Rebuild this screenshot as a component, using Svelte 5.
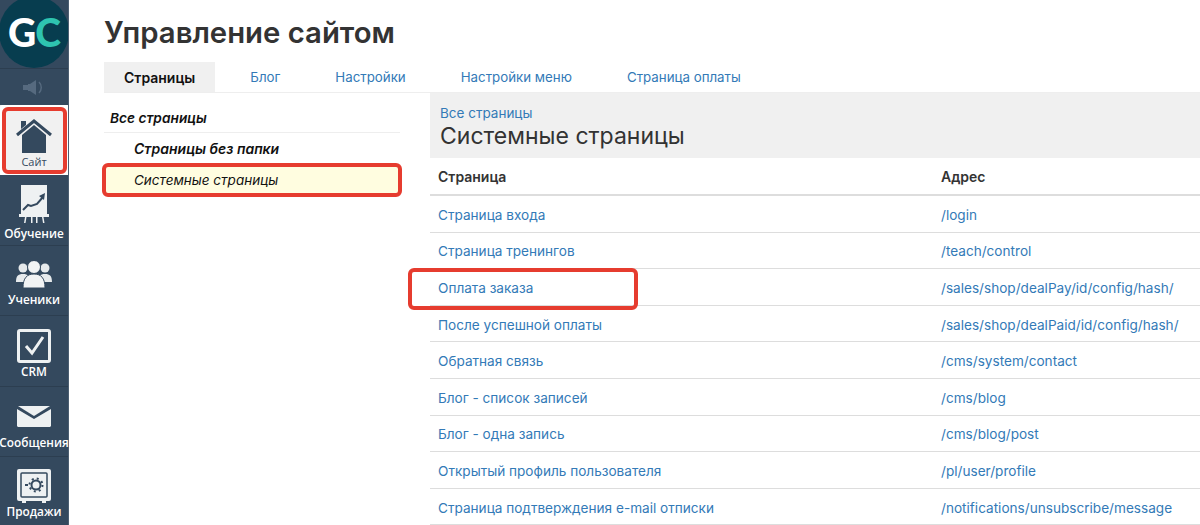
<script>
  const tabs = ["Страницы", "Блог", "Настройки", "Настройки меню", "Страница оплаты"];
  const rows = [
    ["Страница входа", "/login"],
    ["Страница тренингов", "/teach/control"],
    ["Оплата заказа", "/sales/shop/dealPay/id/config/hash/"],
    ["После успешной оплаты", "/sales/shop/dealPaid/id/config/hash/"],
    ["Обратная связь", "/cms/system/contact"],
    ["Блог - список записей", "/cms/blog"],
    ["Блог - одна запись", "/cms/blog/post"],
    ["Открытый профиль пользователя", "/pl/user/profile"],
    ["Страница подтверждения e-mail отписки", "/notifications/unsubscribe/message"]
  ];
</script>

<div class="page">
  <nav class="side">
    <div class="logo">
      <div class="circle"><span class="g">G</span><span class="c">C</span></div>
    </div>
    <div class="sound">
      <svg width="22" height="15" viewBox="0 0 22 15">
        <path d="M0 5h5V4h2l6-4v15L7 11H5v-1H0z" fill="#566a7f" />
        <path d="M16 2c3 3 3 8 0 11" fill="none" stroke="#566a7f" stroke-width="1.500" />
      </svg>
    </div>
    <div class="item site">
      <svg width="36" height="34" viewBox="0 0 36 34">
        <path d="M5 2h5v4l-5 4z" fill="#34495e" />
        <path d="M1 16 18 2l17 14" fill="none" stroke="#34495e" stroke-width="3" />
        <path d="M6 16 18 6l12 10v18H6z" fill="#34495e" />
      </svg>
      <span>Сайт</span>
      <i class="mark"></i>
    </div>
    <div class="item learn">
      <svg width="30" height="38" viewBox="0 0 30 38">
        <rect x="2" y="0" width="26" height="30" fill="#eef1f2" />
        <path d="M4 25l5-5 3 1 6-2 6-7" fill="none" stroke="#34495e" stroke-width="2" />
        <path d="M26 8l-1 7-5-4z" fill="#34495e" />
        <path d="M0 29h30v3H0zM6 32h1.500l-1 6H5zM12 32h1.500v6H12zM17 32h1.500v6H17zM23 32h1.500l1 6H24z" fill="#eef1f2" />
      </svg>
      <span>Обучение</span>
    </div>
    <div class="item people">
      <svg width="36" height="27" viewBox="0 0 36 27">
        <circle cx="7" cy="7" r="4.500" fill="#e6eaec" />
        <circle cx="29" cy="7" r="4.500" fill="#e6eaec" />
        <path d="M0 21c0-6 2-8 7-8s7 2 7 8zM22 21c0-6 2-8 7-8s7 2 7 8z" fill="#e6eaec" />
        <circle cx="18" cy="6" r="6.500" fill="#f1f3f4" stroke="#34495e" />
        <path d="M7 27c0-10 4-14 11-14s11 4 11 14z" fill="#f1f3f4" stroke="#34495e" />
      </svg>
      <span>Ученики</span>
    </div>
    <div class="item">
      <svg width="34" height="34" viewBox="0 0 34 34">
        <rect x="1.500" y="1.500" width="31" height="31" rx="1.500" fill="#34495e" stroke="#eef1f2" stroke-width="3" />
        <path d="M9 17l6 7L26 8" fill="none" stroke="#eef1f2" stroke-width="3" />
      </svg>
      <span>CRM</span>
    </div>
    <div class="item mail">
      <svg width="34" height="21" viewBox="0 0 34 21">
        <path d="M0 3v16.500c0 .8.700 1.500 1.500 1.500h31c.8 0 1.500-.7 1.500-1.500V3L17 13z" fill="#eef1f2" />
        <path d="M1 0h32l-16 10z" fill="#eef1f2" />
      </svg>
      <span>Сообщения</span>
    </div>
    <div class="item safe">
      <svg width="34" height="34" viewBox="0 0 34 34">
        <rect x="0" y="0" width="34" height="32" rx="2" fill="#eef1f2" />
        <rect x="4" y="4" width="26" height="24" rx="1" fill="#eef1f2" stroke="#34495e" stroke-width="1.500" />
        <circle cx="19" cy="16" r="4.500" fill="none" stroke="#34495e" stroke-width="2" />
        <circle cx="19" cy="16" r="6.500" fill="none" stroke="#34495e" stroke-width="2" stroke-dasharray="2 3.100" />
        <path d="M8 16h3" stroke="#34495e" stroke-width="2" />
        <path d="M5 32h4v2H5zM25 32h4v2h-4z" fill="#eef1f2" />
      </svg>
      <span>Продажи</span>
    </div>
  </nav>

  <main class="main">
    <h1>Управление сайтом</h1>
    <div class="tabs">
      {#each tabs as tab, i}
        <span class="tab" class:active={i === 0}>{tab}</span>
      {/each}
    </div>
    <div class="cols">
      <aside class="tree">
        <div class="all">Все страницы</div>
        <div class="folder">Страницы без папки</div>
        <div class="folder current">
          Системные страницы
          <i class="mark"></i>
        </div>
      </aside>
      <section class="content">
        <header class="head">
          <span class="crumb">Все страницы</span>
          <h2>Системные страницы</h2>
        </header>
        <div class="row th">
          <span>Страница</span>
          <span>Адрес</span>
        </div>
        {#each rows as row, i}
          <div class="row">
            <span class="name">
              {row[0]}
              {#if i === 2}<i class="mark"></i>{/if}
            </span>
            <span>{row[1]}</span>
          </div>
        {/each}
      </section>
    </div>
  </main>
</div>

<style>
  :global(body) {
    margin: 0;
    background: #fff;
  }
  .page {
    display: flex;
    width: 1200px;
    height: 525px;
    overflow: hidden;
    font-family: Inter, "Liberation Sans", sans-serif;
  }
  .side {
    flex: 0 0 69px;
    width: 69px;
    background: #34495e;
    font-family: "Open Sans", sans-serif;
    border-right: 1px solid #4c5f72;
    box-sizing: border-box;
  }
  .logo {
    height: 68px;
    overflow: hidden;
    border-bottom: 1px solid #2c3e50;
    box-sizing: content-box;
  }
  .circle {
    width: 70px;
    height: 72px;
    margin: -4px 0 0 -1px;
    border-radius: 50%;
    background: #073d4f;
    display: flex;
    align-items: center;
    justify-content: center;
    font: 900 39px/1 Lato, sans-serif;
    letter-spacing: -1px;
  }
  .g {
    color: #fff;
  }
  .c {
    color: #2ec4b0;
  }
  .sound {
    height: 36px;
    display: flex;
    align-items: center;
    justify-content: center;
  }
  .item {
    position: relative;
    height: 70.500px;
    box-sizing: border-box;
    border-bottom: 1px solid #2c3e50;
    display: flex;
    flex-direction: column;
    align-items: center;
    justify-content: flex-end;
    padding-bottom: 6px;
    color: #fff;
    font-size: 11.800px;
    font-weight: 600;
    line-height: 17px;
    white-space: nowrap;
  }
  .item svg {
    flex: none;
  }
  .learn {
    padding-bottom: 3px;
  }
  .learn svg {
    margin-bottom: 2px;
  }
  .people {
    padding-bottom: 7px;
  }
  .people svg {
    margin-bottom: 3px;
  }
  .mail {
    padding-bottom: 5px;
  }
  .mail svg {
    margin-bottom: 7px;
  }
  .safe {
    height: 72px;
    border-bottom: 0;
    padding-bottom: 9px;
  }
  .site {
    height: 70px;
    overflow: hidden;
    padding-bottom: 5px;
    background: #f1f1f1;
    color: #34495e;
    font-size: 11px;
    font-weight: 400;
    border: 0;
  }
  .mark {
    position: absolute;
    display: block;
    box-sizing: border-box;
    border: 4px solid #e63c2f;
    border-radius: 6px;
    pointer-events: none;
  }
  .site .mark {
    left: 2px;
    top: 2px;
    width: 65px;
    height: 67px;
    box-shadow: 0 0 0 4px #fff;
  }
  .main {
    flex: 1;
    padding-left: 35px;
    min-width: 0;
  }
  h1 {
    margin: 0;
    height: 62px;
    font-size: 29.300px;
    font-weight: 600;
    line-height: 66px;
    color: #333;
  }
  .tabs {
    display: flex;
    height: 31px;
    box-sizing: border-box;
    border-bottom: 1px solid #eee;
    font-size: 13.300px;
    line-height: 31px;
    color: #337ab7;
  }
  .tab {
    padding: 0 20px;
    margin-right: 15px;
  }
  .tab.active {
    background: #f0f0f0;
    color: #111;
    font-size: 14px;
    font-weight: 600;
  }
  .cols {
    display: flex;
    gap: 30px;
  }
  .tree {
    flex: 0 0 296px;
    font-size: 14px;
    font-style: italic;
    color: #111;
  }
  .all {
    height: 40px;
    padding-left: 6px;
    box-sizing: border-box;
    font-size: 13.700px;
    line-height: 50px;
    font-weight: 600;
    border-bottom: 1px solid #eee;
  }
  .folder {
    position: relative;
    height: 31px;
    padding-left: 30px;
    line-height: 31px;
    font-weight: 600;
  }
  .current {
    font-size: 13.500px;
    line-height: 32px;
    font-weight: 400;
    background: #fffde0;
  }
  .current .mark {
    left: -2px;
    top: -1px;
    width: 300px;
    height: 34px;
  }
  .content {
    flex: 1;
    min-width: 0;
  }
  .head {
    height: 65px;
    box-sizing: border-box;
    padding: 12px 10px 0;
    background: #f0f0f0;
  }
  .crumb {
    display: block;
    color: #337ab7;
    font-size: 13.500px;
    line-height: 17px;
  }
  h2 {
    margin: 0;
    font-size: 23px;
    font-weight: 400;
    line-height: 29px;
    color: #333;
  }
  .row {
    display: grid;
    grid-template-columns: 503px 1fr;
    height: 36.600px;
    padding: 2px 0 0 8px;
    box-sizing: border-box;
    align-items: center;
    border-bottom: 1px solid #ddd;
    font-size: 13.600px;
    color: #337ab7;
  }
  .th {
    height: 38px;
    padding-top: 1px;
    border-bottom: 2px solid #ddd;
    color: #333;
    font-size: 14px;
    font-weight: 600;
  }
  .name {
    position: relative;
  }
  .name .mark {
    left: -30px;
    top: -12px;
    width: 230px;
    height: 42px;
  }
</style>
